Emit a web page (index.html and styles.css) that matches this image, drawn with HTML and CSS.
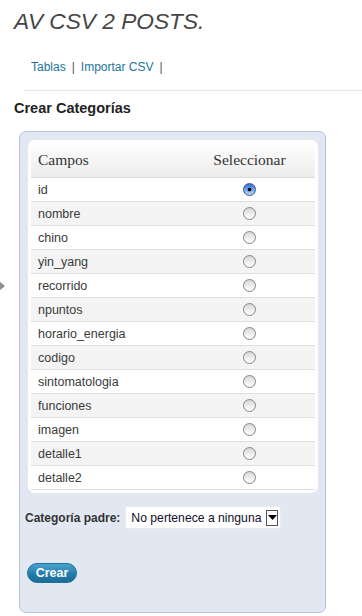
FILE: index.html
```html
<!DOCTYPE html>
<html lang="es">
<head>
<meta charset="utf-8">
<title>AV CSV 2 POSTS.</title>
<link rel="stylesheet" href="styles.css">
</head>
<body>
<div class="edge-arrow"><svg width="5" height="14" viewBox="0 0 5 14"><path d="M-4 0 L4 6 Q5 7 4 8 L-4 14 Z" fill="#8f8f8f"/></svg></div>
<h1 class="title">AV CSV 2 POSTS.</h1>
<nav class="links"><a href="#">Tablas</a><span class="sep">|</span><a href="#">Importar CSV</a><span class="sep">|</span></nav>
<hr class="rule">
<h2 class="heading">Crear Categorías</h2>
<form class="panel">
  <div class="table">
    <div class="thead"><span class="col-name">Campos</span><span class="col-sel">Seleccionar</span></div>
    <div class="row"><span class="col-name">id</span><span class="col-sel"><span class="radio checked"></span></span></div>
    <div class="row alt"><span class="col-name">nombre</span><span class="col-sel"><span class="radio"></span></span></div>
    <div class="row"><span class="col-name">chino</span><span class="col-sel"><span class="radio"></span></span></div>
    <div class="row alt"><span class="col-name">yin_yang</span><span class="col-sel"><span class="radio"></span></span></div>
    <div class="row"><span class="col-name">recorrido</span><span class="col-sel"><span class="radio"></span></span></div>
    <div class="row alt"><span class="col-name">npuntos</span><span class="col-sel"><span class="radio"></span></span></div>
    <div class="row"><span class="col-name">horario_energia</span><span class="col-sel"><span class="radio"></span></span></div>
    <div class="row alt"><span class="col-name">codigo</span><span class="col-sel"><span class="radio"></span></span></div>
    <div class="row"><span class="col-name">sintomatologia</span><span class="col-sel"><span class="radio"></span></span></div>
    <div class="row alt"><span class="col-name">funciones</span><span class="col-sel"><span class="radio"></span></span></div>
    <div class="row"><span class="col-name">imagen</span><span class="col-sel"><span class="radio"></span></span></div>
    <div class="row alt"><span class="col-name">detalle1</span><span class="col-sel"><span class="radio"></span></span></div>
    <div class="row"><span class="col-name">detalle2</span><span class="col-sel"><span class="radio"></span></span></div>
  </div>
  <div class="parent-row">
    <span class="parent-label">Categoría padre:</span>
    <div class="select"><span class="select-text">No pertenece a ninguna</span><span class="select-arrow"><svg width="9" height="5" viewBox="0 0 9 5"><path d="M0 0 H9 L4.5 5 Z" fill="#000"/></svg></span></div>
  </div>
  <div class="actions"><span class="button">Crear</span></div>
</form>
</body>
</html>
```
FILE: styles.css
```css
html { background: #fff; }
body {
  margin: 0;
  font-family: "Liberation Sans", Arial, sans-serif;
  color: #333;
  position: relative;
  min-height: 616px;
}
.edge-arrow {
  position: absolute;
  left: 0;
  top: 279px;
  line-height: 0;
}
.title {
  margin: 8px 0 0 14px;
  font-size: 22.7px;
  line-height: 26px;
  font-style: italic;
  font-weight: normal;
  color: #464646;
}
.links {
  margin-top: 25px;
  padding-left: 31px;
  font-size: 12px;
  line-height: 16px;
}
.links a {
  color: #21759b;
  text-decoration: none;
}
.links .sep {
  color: #555;
  margin: 0 6px 0 6px;
}
.rule {
  margin: 15px 0 0 24px;
  border: 0;
  border-top: 1px solid #e6e6e6;
  height: 0;
}
.heading {
  margin: 8px 0 0 14px;
  font-size: 14.5px;
  line-height: 18px;
  font-weight: bold;
  color: #222;
}
.panel {
  box-sizing: border-box;
  margin: 14px 0 0 19px;
  width: 307px;
  height: 482px;
  padding: 8px 7px 0 5px;
  background: #e2e8f2;
  border: 1px solid #b4c3da;
  border-radius: 7px;
}
.table {
  margin-left: 3px;
  background: #fff;
  border-radius: 7px;
  padding: 3px;
}
.thead {
  display: flex;
  align-items: center;
  height: 34px;
  border-bottom: 1px solid #dcdcdc;
  border-radius: 5px 5px 0 0;
  background: linear-gradient(#fdfdfd, #ececec);
  font-family: "Liberation Serif", Georgia, serif;
  font-size: 15.5px;
  color: #333;
}
.row {
  display: flex;
  align-items: center;
  height: 23px;
  border-bottom: 1px solid #dfdfdf;
  font-size: 12.5px;
  color: #3a3a3a;
  background: #fff;
}
.row.alt { background: #f4f4f4; }
.col-name {
  flex: 1;
  padding-left: 7px;
}
.col-sel {
  width: 131px;
  display: flex;
  justify-content: center;
}
.radio {
  box-sizing: border-box;
  width: 13px;
  height: 13px;
  border-radius: 50%;
  border: 1px solid #858585;
  background: linear-gradient(#d8d8d8, #ffffff);
}
.radio.checked {
  border-color: #35598f;
  background:
    radial-gradient(circle, #000 0 1.6px, transparent 2.2px),
    linear-gradient(#2f6fd3, #b6dafc);
}
.parent-row {
  display: flex;
  align-items: center;
  margin-top: 13px;
}
.parent-label {
  font-size: 12px;
  font-weight: bold;
  color: #333;
}
.select {
  box-sizing: border-box;
  margin-left: 5px;
  width: 156px;
  height: 23px;
  background: #fff;
  border: 1px solid #e8ecf2;
  border-radius: 2px;
  display: flex;
  align-items: center;
  padding: 0 2px 0 5px;
}
.select-text {
  flex: 1;
  font-size: 12.2px;
  color: #10102a;
  white-space: nowrap;
}
.select-arrow {
  box-sizing: border-box;
  width: 12px;
  height: 16px;
  border: 1px solid #555;
  background: #fff;
  display: flex;
  align-items: center;
  justify-content: center;
}
.actions {
  margin-top: 34px;
  padding-left: 2px;
}
.button {
  box-sizing: border-box;
  display: inline-flex;
  align-items: center;
  justify-content: center;
  width: 50px;
  height: 20px;
  border-radius: 10px;
  background: linear-gradient(#4aa2cf, #217aa8 60%, #1c6d99);
  border: 1px solid #1f6f9b;
  color: #fff;
  font-size: 12.5px;
  font-weight: bold;
}
```
